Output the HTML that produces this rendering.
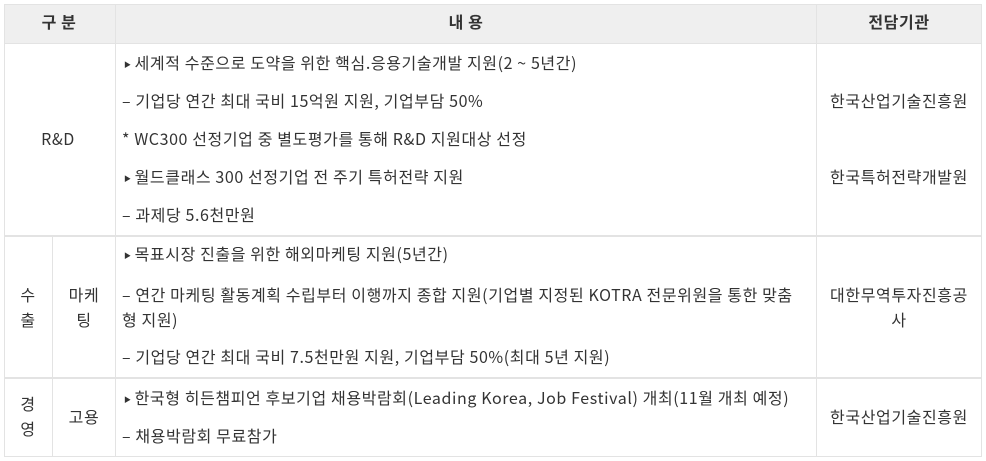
<!DOCTYPE html>
<html><head><meta charset="utf-8"><style>
body{margin:0;background:#fff;width:986px;height:461px;position:relative;overflow:hidden;font-family:"Noto Sans CJK KR","Liberation Sans",sans-serif;font-size:16px;letter-spacing:0.6px;color:#333}
.h{position:absolute;background:#e3e3e3}
.t{position:absolute;line-height:20px;white-space:nowrap;margin-top:-1px}
.c{transform:translateX(-50%);text-align:center}
.b{font-weight:bold;color:#333}
.tri{font-size:7px;vertical-align:2px;margin-right:3px;margin-left:2px}
</style></head><body>
<div style="position:absolute;left:4px;top:4px;width:978px;height:39px;background:#efefef"></div>
<div class="h" style="left:4px;top:4px;width:978px;height:1px"></div>
<div class="h" style="left:4px;top:43px;width:978px;height:1px"></div>
<div class="h" style="left:4px;top:235px;width:978px;height:2px"></div>
<div class="h" style="left:4px;top:377px;width:978px;height:2px"></div>
<div class="h" style="left:4px;top:456px;width:978px;height:1px"></div>
<div class="h" style="left:4px;top:4px;width:1px;height:453px"></div>
<div class="h" style="left:115px;top:4px;width:1px;height:453px"></div>
<div class="h" style="left:52px;top:236px;width:1px;height:221px"></div>
<div class="h" style="left:816px;top:4px;width:1px;height:453px"></div>
<div class="h" style="left:981px;top:4px;width:1px;height:453px"></div>

<div class="t c b" style="left:59px;top:12px">구 분</div>
<div class="t c b" style="left:466px;top:12px">내 용</div>
<div class="t c b" style="left:899px;top:12px">전담기관</div>

<div class="t c" style="left:58px;top:129px">R&amp;D</div>
<div class="t" style="left:122px;top:53px"><span class="tri">▶</span>세계적 수준으로 도약을 위한 핵심.응용기술개발 지원(2 ~ 5년간)</div>
<div class="t" style="left:122px;top:91px">– 기업당 연간 최대 국비 15억원 지원, 기업부담 50%</div>
<div class="t" style="left:122px;top:129px">* WC300 선정기업 중 별도평가를 통해 R&amp;D 지원대상 선정</div>
<div class="t" style="left:122px;top:167px"><span class="tri">▶</span>월드클래스 300 선정기업 전 주기 특허전략 지원</div>
<div class="t" style="left:122px;top:205px">– 과제당 5.6천만원</div>
<div class="t c" style="left:899px;top:91px">한국산업기술진흥원</div>
<div class="t c" style="left:899px;top:167px">한국특허전략개발원</div>

<div class="t c" style="left:28px;top:285px">수</div>
<div class="t c" style="left:28px;top:310px">출</div>
<div class="t c" style="left:84px;top:285px">마케</div>
<div class="t c" style="left:84px;top:310px">팅</div>
<div class="t" style="left:122px;top:244px"><span class="tri">▶</span>목표시장 진출을 위한 해외마케팅 지원(5년간)</div>
<div class="t" style="left:122px;top:285px">– 연간 마케팅 활동계획 수립부터 이행까지 종합 지원(기업별 지정된 KOTRA 전문위원을 통한 맞춤</div>
<div class="t" style="left:122px;top:310px">형 지원)</div>
<div class="t" style="left:122px;top:347px">– 기업당 연간 최대 국비 7.5천만원 지원, 기업부담 50%(최대 5년 지원)</div>
<div class="t c" style="left:899px;top:285px">대한무역투자진흥공</div>
<div class="t c" style="left:899px;top:310px">사</div>

<div class="t c" style="left:28px;top:394px">경</div>
<div class="t c" style="left:28px;top:419px">영</div>
<div class="t c" style="left:84px;top:407px">고용</div>
<div class="t" style="left:122px;top:388px"><span class="tri">▶</span>한국형 히든챔피언 후보기업 채용박람회(Leading Korea, Job Festival) 개최(11월 개최 예정)</div>
<div class="t" style="left:122px;top:426px">– 채용박람회 무료참가</div>
<div class="t c" style="left:899px;top:407px">한국산업기술진흥원</div>
</body></html>
